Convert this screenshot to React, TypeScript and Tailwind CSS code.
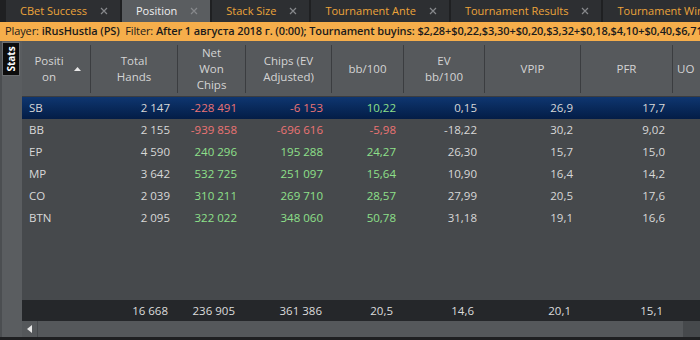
import React from "react";

const tabs = [
  { name: "CBet Success" },
  { name: "Position", active: true },
  { name: "Stack Size" },
  { name: "Tournament Ante" },
  { name: "Tournament Results" },
  { name: "Tournament Winnings" },
];

const cols = "grid-cols-[69px_87px_68px_86px_72px_81px_96px_92px_1fr]";

type Row = {
  pos: string;
  hands: string;
  net: string;
  ev: string;
  bb: string;
  evbb: string;
  vpip: string;
  pfr: string;
};

const rows: Row[] = [
  { pos: "SB", hands: "2 147", net: "-228 491", ev: "-6 153", bb: "10,22", evbb: "0,15", vpip: "26,9", pfr: "17,7" },
  { pos: "BB", hands: "2 155", net: "-939 858", ev: "-696 616", bb: "-5,98", evbb: "-18,22", vpip: "30,2", pfr: "9,02" },
  { pos: "EP", hands: "4 590", net: "240 296", ev: "195 288", bb: "24,27", evbb: "26,30", vpip: "15,7", pfr: "15,0" },
  { pos: "MP", hands: "3 642", net: "532 725", ev: "251 097", bb: "15,64", evbb: "10,90", vpip: "16,4", pfr: "14,2" },
  { pos: "CO", hands: "2 039", net: "310 211", ev: "269 710", bb: "28,57", evbb: "27,99", vpip: "20,5", pfr: "17,6" },
  { pos: "BTN", hands: "2 095", net: "322 022", ev: "348 060", bb: "50,78", evbb: "31,18", vpip: "19,1", pfr: "16,6" },
];

const tone = (v: string) => (v.startsWith("-") ? "text-[#ec7474]" : "text-[#8ee08a]");

const Close = () => (
  <svg width="8" height="8" viewBox="0 0 8 8" className="shrink-0">
    <path d="M1 1L7 7M7 1L1 7" stroke="#86888b" strokeWidth="1.2" />
  </svg>
);

const HeadCell = ({ children, last }: { children: React.ReactNode; last?: boolean }) => (
  <div
    className={`flex items-center justify-center text-center my-[4px] leading-[16px] ${
      last ? "" : "border-r border-[#3b3d40]"
    }`}
  >
    {children}
  </div>
);

export default function App() {
  return (
    <div
      className="w-[700px] h-[340px] flex flex-col overflow-hidden bg-[#1f2022] text-[11.5px]"
      style={{ fontFamily: '"Open Sans", "Noto Sans", sans-serif' }}
    >
      {/* tabs */}
      <div className="h-[22px] flex gap-[2px] pl-[6px] bg-[#1f2022] whitespace-nowrap text-[11px]">
        {tabs.map((t) => (
          <div
            key={t.name}
            className={`flex items-center gap-[13px] pl-[14px] pr-[12px] shrink-0 ${
              t.active ? "bg-[#5a5d60] text-[#f0f0f0]" : "bg-[#2d2f32] text-[#eca43a]"
            }`}
          >
            <span>{t.name}</span>
            <Close />
          </div>
        ))}
      </div>

      {/* filter bar */}
      <div className="h-[19px] flex items-center bg-[#f6ae4b] text-[#1b1b1b] pl-[5px] whitespace-nowrap text-[11px] tracking-[-0.1px] overflow-hidden">
        <span>Player:&nbsp;</span>
        <b className="font-semibold">iRusHustla (PS)</b>
        <span>&nbsp;&nbsp;Filter:&nbsp;</span>
        <b className="font-semibold">
          After 1 августа 2018 г. (0:00); Tournament buyins: $2,28+$0,22,$3,30+$0,20,$3,32+$0,18,$4,10+$0,40,$6,71+$0,29
        </b>
      </div>

      <div className="flex-1 flex min-h-0">
        {/* left strip */}
        <div className="w-[22px] bg-[#5a5d60] border-l-[2px] border-[#4b4e51] pt-[1px]">
          <div className="w-[18px] h-[34px] bg-[#0d0d0d] border border-[#6a6d70] flex items-center justify-center">
            <span className="-rotate-90 text-white text-[10px] font-bold leading-none">Stats</span>
          </div>
        </div>

        {/* grid */}
        <div className="flex-1 flex flex-col min-w-0 bg-[#46494c]">
          <div className={`grid ${cols} h-[56px] bg-[#56595c] text-[#d4d4d4] border-b border-[#3b3d40] whitespace-nowrap`}>
            <HeadCell>
              <div className="relative w-full flex justify-center pr-[14px]">
                <span>
                  Positi
                  <br />
                  on
                </span>
                <svg width="7" height="4" viewBox="0 0 7 4" className="absolute right-[9px] top-[14px]">
                  <path d="M0 4L3.5 0L7 4Z" fill="#e8e8e8" />
                </svg>
              </div>
            </HeadCell>
            <HeadCell>
              Total
              <br />
              Hands
            </HeadCell>
            <HeadCell>
              Net
              <br />
              Won
              <br />
              Chips
            </HeadCell>
            <HeadCell>
              Chips (EV
              <br />
              Adjusted)
            </HeadCell>
            <HeadCell>bb/100</HeadCell>
            <HeadCell>
              EV
              <br />
              bb/100
            </HeadCell>
            <HeadCell>VPIP</HeadCell>
            <HeadCell>PFR</HeadCell>
            <HeadCell last>
              <span className="w-full text-left pl-[4px]">UO</span>
            </HeadCell>
          </div>

          <div className="flex-1 text-[#d8d8d8]">
            {rows.map((r, i) => (
              <div
                key={r.pos}
                className={`grid ${cols} h-[22px] items-center text-right ${
                  i === 0 ? "bg-gradient-to-b from-[#0f3670] to-[#041d46]" : ""
                }`}
              >
                <span className="text-left pl-[7px]">{r.pos}</span>
                <span className="pr-[8px]">{r.hands}</span>
                <span className={`pr-[9px] ${tone(r.net)}`}>{r.net}</span>
                <span className={`pr-[9px] ${tone(r.ev)}`}>{r.ev}</span>
                <span className={`pr-[8px] ${tone(r.bb)}`}>{r.bb}</span>
                <span className="pr-[8px]">{r.evbb}</span>
                <span className="pr-[8px]">{r.vpip}</span>
                <span className="pr-[8px]">{r.pfr}</span>
                <span />
              </div>
            ))}
          </div>

          <div className={`grid ${cols} h-[21px] items-center text-right bg-[#25272a] text-[#dcdcdc]`}>
            <span />
            <span className="pr-[10px]">16 668</span>
            <span className="pr-[11px]">236 905</span>
            <span className="pr-[10px]">361 386</span>
            <span className="pr-[11px]">20,5</span>
            <span className="pr-[11px]">14,6</span>
            <span className="pr-[10px]">20,1</span>
            <span className="pr-[10px]">15,1</span>
            <span />
          </div>

          <div className="h-[16px] flex bg-[#55585b]">
            <div className="w-[16px] flex items-center justify-center border-r border-[#45484b]">
              <svg width="5" height="8" viewBox="0 0 5 8">
                <path d="M5 0L0 4L5 8Z" fill="#e6e6e6" />
              </svg>
            </div>
            <div className="flex-1" />
            <div className="w-[17px] bg-[#46494c]" />
          </div>
        </div>
      </div>
      <div className="h-[3px] bg-[#1f2022]" />
    </div>
  );
}
